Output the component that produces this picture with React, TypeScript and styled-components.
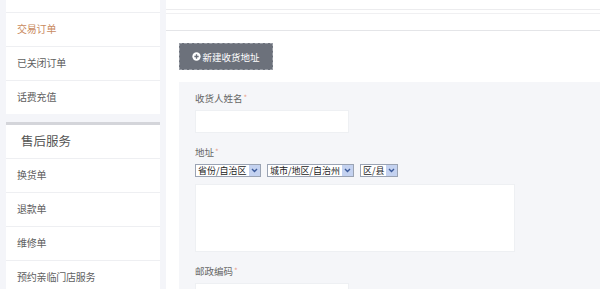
import React from "react";
import styled, { createGlobalStyle } from "styled-components";

const Global = createGlobalStyle`
  html, body { margin: 0; padding: 0; }
  body {
    background: #f4f5f9;
    font-family: "Noto Sans CJK SC", "Noto Sans", sans-serif;
    overflow: hidden;
  }
`;

const Page = styled.div`
  display: flex;
  gap: 6px;
  padding-left: 6px;
  width: 600px;
  height: 289px;
  box-sizing: border-box;
  overflow: hidden;
`;

const Sidebar = styled.aside`
  width: 154px;
  flex: none;
  display: flex;
  flex-direction: column;
  gap: 8px;
`;

const Section = styled.div<{ $top?: boolean }>`
  background: #fff;
  border-top: ${(p) => (p.$top ? "3px solid #d4d5da" : "none")};
  display: flex;
  flex-direction: column;
  flex: none;
`;

const Stub = styled.div`
  height: 12px;
  flex: none;
  border-bottom: 1px solid #eeeff2;
`;

const Item = styled.div<{ $active?: boolean; $last?: boolean }>`
  height: 33px;
  flex: none;
  box-sizing: border-box;
  padding: 0 0 3px 11px;
  border-bottom: ${(p) => (p.$last ? "none" : "1px solid #eeeff2")};
  height: ${(p) => (p.$last ? "33px" : "34px")};
  display: flex;
  align-items: center;
  font-size: 10px;
  letter-spacing: -0.2px;
  color: ${(p) => (p.$active ? "#c98a60" : "#606060")};
`;

const Header = styled.div`
  height: 34px;
  box-sizing: border-box;
  flex: none;
  border-bottom: 1px solid #eeeff2;
  display: flex;
  align-items: center;
  padding: 0 0 3px 15px;
  font-size: 12.5px;
  color: #555;
`;

const Main = styled.main`
  flex: 1;
  background: #fff;
  display: flex;
  flex-direction: column;
  overflow: hidden;
`;

const TopBar = styled.div`
  height: 9px;
  flex: none;
  border-bottom: 1px solid #ececee;
`;

const TopBar2 = styled.div`
  margin-top: 3px;
  height: 16px;
  flex: none;
  border-top: 1px solid #f0f0f2;
  border-bottom: 1px solid #e4e5e8;
`;

const Content = styled.div`
  padding: 12px 0 0 13px;
  flex: none;
  display: flex;
  flex-direction: column;
  align-items: flex-start;
`;

const AddButton = styled.button`
  height: 27px;
  width: 94px;
  background: #6c717b;
  border: 1px dashed #9a9ea6;
  color: #fff;
  font-family: inherit;
  font-size: 9.5px;
  display: flex;
  align-items: center;
  justify-content: center;
  gap: 1px;
  padding: 0;
  box-sizing: border-box;
`;

const FormPanel = styled.div`
  margin: 12px 0 0 13px;
  flex: none;
  background: #f5f6f9;
  padding: 10px 0 0 16px;
  display: flex;
  flex-direction: column;
  height: 220px;
`;

const Label = styled.div`
  font-size: 9.5px;
  color: #666;
  height: 12px;
  line-height: 12px;
  display: flex;
  gap: 1px;
`;

const Star = styled.span`
  color: #eaa48c;
  font-size: 8px;
`;

const Field = styled.div<{ $mb: number }>`
  display: flex;
  flex-direction: column;
  gap: 6px;
  flex: none;
  margin-bottom: ${(p) => p.$mb}px;
`;

const TextInput = styled.div`
  width: 154px;
  height: 23px;
  background: #fff;
  border: 1px solid #eef0f3;
  box-sizing: border-box;
`;

const SelectRow = styled.div`
  display: flex;
  gap: 6px;
`;

const Select = styled.div<{ $w: number }>`
  width: ${(p) => p.$w}px;
  height: 13px;
  border: 1px solid #9aa3b3;
  background: #fff;
  box-sizing: border-box;
  display: flex;
  align-items: center;
  justify-content: space-between;
  font-size: 9px;
  color: #222;
  padding-left: 2px;
`;

const SelectText = styled.span`
  line-height: 11px;
  white-space: nowrap;
`;

const Arrow = styled.span`
  width: 11px;
  height: 11px;
  background: #c4d2f0;
  display: flex;
  align-items: center;
  justify-content: center;
  flex: none;
`;

const TextArea = styled.div`
  margin-top: 7px;
  width: 320px;
  height: 68px;
  background: #fff;
  border: 1px solid #eef0f3;
  box-sizing: border-box;
`;

const PlusIcon = () => (
  <svg width="9" height="9" viewBox="0 0 10 10">
    <circle cx="5" cy="5" r="4.6" fill="#fff" />
    <path d="M5 2.6V7.4M2.6 5H7.4" stroke="#6c717b" strokeWidth="1.5" />
  </svg>
);

const Chevron = () => (
  <svg width="7" height="5" viewBox="0 0 7 5">
    <path d="M1 1L3.5 3.5L6 1" stroke="#3b5a9a" strokeWidth="1.4" fill="none" />
  </svg>
);

const Dropdown = ({ w, text }: { w: number; text: string }) => (
  <Select $w={w}>
    <SelectText>{text}</SelectText>
    <Arrow>
      <Chevron />
    </Arrow>
  </Select>
);

export default function App() {
  return (
    <>
      <Global />
      <Page>
        <Sidebar>
          <Section>
            <Stub />
            <Item $active>交易订单</Item>
            <Item>已关闭订单</Item>
            <Item $last>话费充值</Item>
          </Section>
          <Section $top>
            <Header>售后服务</Header>
            <Item>换货单</Item>
            <Item>退款单</Item>
            <Item>维修单</Item>
            <Item>预约亲临门店服务</Item>
          </Section>
        </Sidebar>
        <Main>
          <TopBar />
          <TopBar2 />
          <Content>
            <AddButton>
              <PlusIcon />
              新建收货地址
            </AddButton>
          </Content>
          <FormPanel>
            <Field $mb={13}>
              <Label>
                收货人姓名<Star>*</Star>
              </Label>
              <TextInput />
            </Field>
            <Field $mb={13}>
              <Label>
                地址<Star>*</Star>
              </Label>
              <div>
                <SelectRow>
                  <Dropdown w={66} text="省份/自治区" />
                  <Dropdown w={87} text="城市/地区/自治州" />
                  <Dropdown w={38} text="区/县" />
                </SelectRow>
                <TextArea />
              </div>
            </Field>
            <Field $mb={0}>
              <Label>
                邮政编码<Star>*</Star>
              </Label>
              <TextInput />
            </Field>
          </FormPanel>
        </Main>
      </Page>
    </>
  );
}
